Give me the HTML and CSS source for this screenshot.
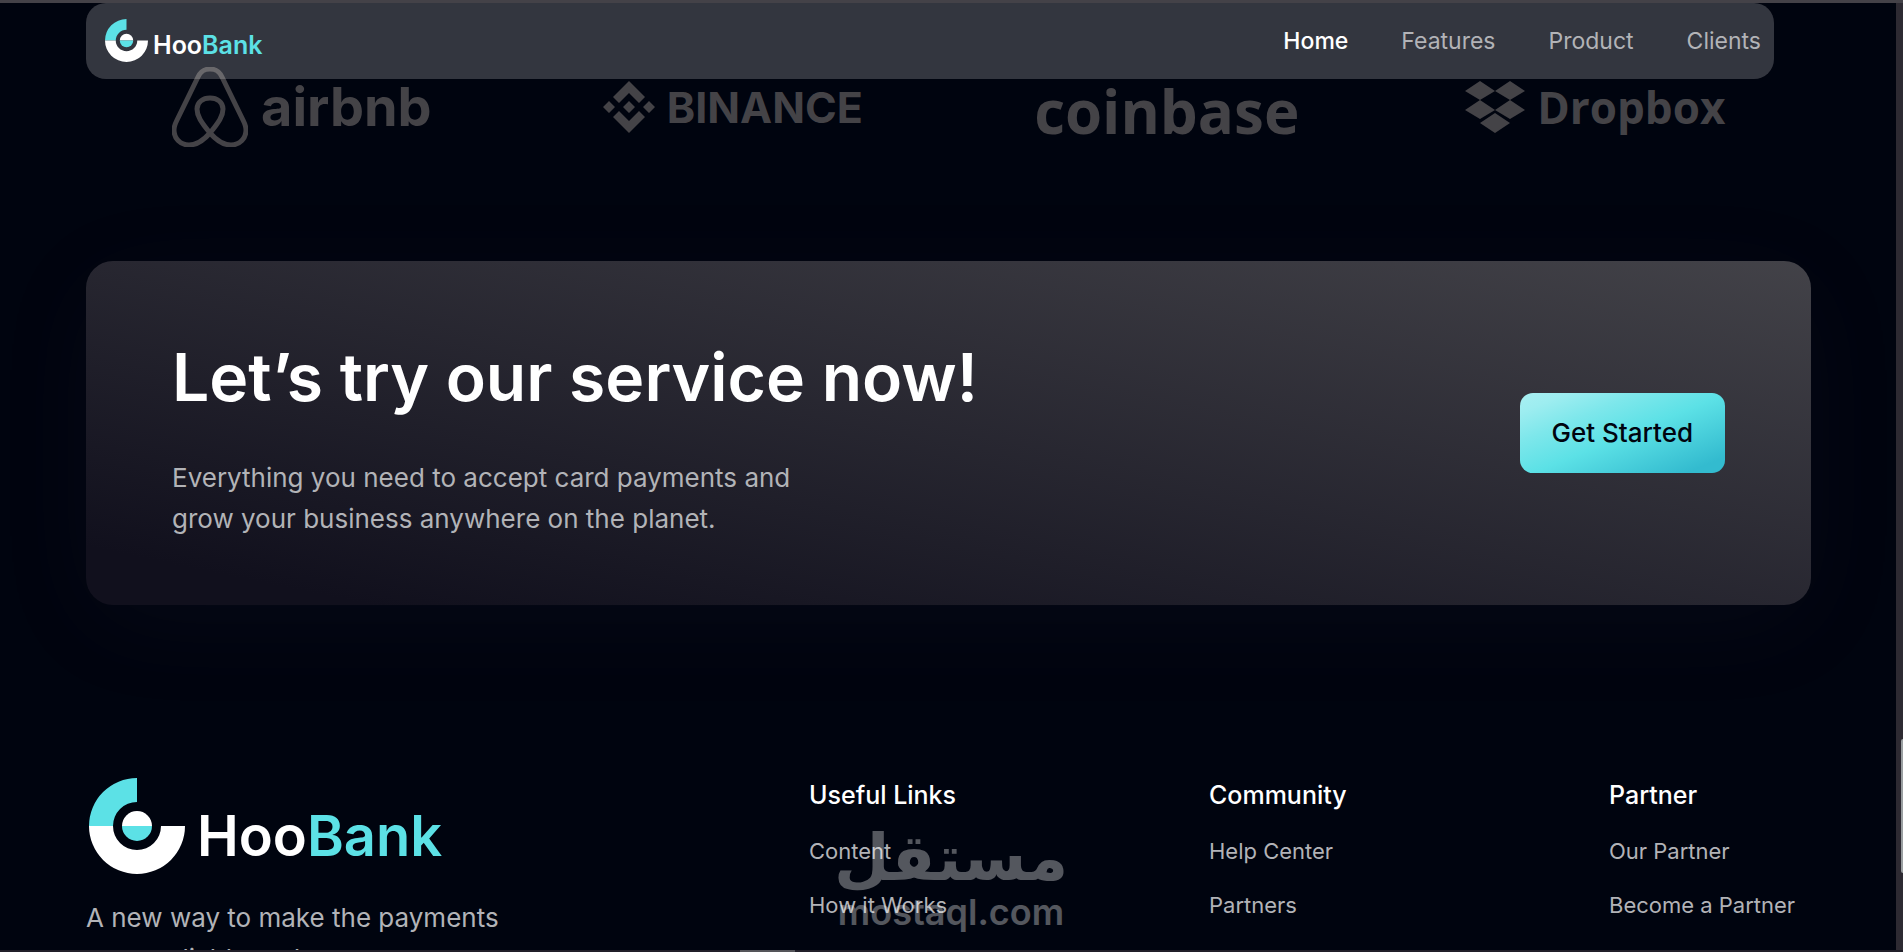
FILE: index.html
```html
<!DOCTYPE html>
<html lang="en">
<head>
    <meta charset="UTF-8">
    <meta name="viewport" content="width=device-width, initial-scale=1.0">
    <title>HooBank</title>

    <link rel="stylesheet" href="styles.css">
</head>
<body>

    <div class="top-strip"></div>

    <div class="view">
        <div class="page">

            <!-- Navbar -->
            <header class="navbar">
                <a class="logo" href="#home">
                    <svg class="logo-icon" viewBox="0 0 96 96" aria-hidden="true">
                        <path d="M48 0A48 48 0 0 0 0 48H24A24 24 0 0 1 48 24Z" fill="#5ce1e6"/>
                        <path d="M0 48A48 48 0 0 0 96 48H72A24 24 0 0 1 24 48Z" fill="#fff"/>
                        <path d="M33 48A15 15 0 0 1 63 48Z" fill="#fff"/>
                        <path d="M33 48A15 15 0 0 0 63 48Z" fill="#5ce1e6"/>
                    </svg>
                    <span class="logo-text">Hoo<span class="accent">Bank</span></span>
                </a>
                <nav>
                    <ul class="nav-list">
                        <li><a class="active" href="#home">Home</a></li>
                        <li><a href="#features">Features</a></li>
                        <li><a href="#product">Product</a></li>
                        <li><a href="#clients">Clients</a></li>
                    </ul>
                </nav>
            </header>

            <!-- Clients Section -->
            <section class="clients" id="clients">
                <div class="client">
                    <div class="client-logo">
                        <svg class="airbnb-icon" viewBox="0 0 76 80" aria-hidden="true">
                            <path d="M38 66C29 55 25 49 25 42C25 35 31 31 38 31C45 31 51 35 51 42C51 49 47 55 38 66C31 74 25 78 17 78C8 78 2 71 2 63C2 60 3 57 5 53L26 10C29 4 32 2 38 2C44 2 47 4 50 10L71 53C73 57 74 60 74 63C74 71 68 78 59 78C51 78 45 74 38 66Z" fill="none" stroke="currentColor" stroke-width="5" stroke-linejoin="round"/>
                        </svg>
                        <span class="airbnb-text">airbnb</span>
                    </div>
                </div>
                <div class="client">
                    <div class="client-logo">
                        <svg class="binance-icon" viewBox="0 0 52 52" aria-hidden="true">
                            <path d="M10 16L26 0L42 16L36 22L26 12L16 22Z" fill="currentColor"/>
                            <path d="M10 36L16 30L26 40L36 30L42 36L26 52Z" fill="currentColor"/>
                            <path d="M0 26L6 20L12 26L6 32ZM20 26L26 20L32 26L26 32ZM40 26L46 20L52 26L46 32Z" fill="currentColor"/>
                        </svg>
                        <span class="binance-text">BINANCE</span>
                    </div>
                </div>
                <div class="client">
                    <div class="client-logo">
                        <span class="coinbase-text">coinbase</span>
                    </div>
                </div>
                <div class="client">
                    <div class="client-logo">
                        <svg class="dropbox-icon" viewBox="0 0 60 52" aria-hidden="true">
                            <path d="M15 0L30 10L15 19L0 10ZM45 0L60 10L45 19L30 10ZM15 19L30 29L15 38L0 29ZM45 19L60 29L45 38L30 29ZM30 32L45 42L30 52L15 42Z" fill="currentColor"/>
                        </svg>
                        <span class="dropbox-text">Dropbox</span>
                    </div>
                </div>
            </section>

            <!-- CTA Section -->
            <section class="cta">
                <div class="cta-content">
                    <h2>Let’s try our service now!</h2>
                    <p>Everything you need to accept card payments and grow your business anywhere on the planet.</p>
                </div>
                <button class="btn" type="button">Get Started</button>
            </section>

            <!-- Footer Section -->
            <footer class="footer">
                <div class="footer-brand">
                    <a class="logo logo-large" href="#home">
                        <svg class="logo-icon" viewBox="0 0 96 96" aria-hidden="true">
                            <path d="M48 0A48 48 0 0 0 0 48H24A24 24 0 0 1 48 24Z" fill="#5ce1e6"/>
                            <path d="M0 48A48 48 0 0 0 96 48H72A24 24 0 0 1 24 48Z" fill="#fff"/>
                            <path d="M33 48A15 15 0 0 1 63 48Z" fill="#fff"/>
                            <path d="M33 48A15 15 0 0 0 63 48Z" fill="#5ce1e6"/>
                        </svg>
                        <span class="logo-text">Hoo<span class="accent">Bank</span></span>
                    </a>
                    <p>A new way to make the payments easy, reliable and secure.</p>
                </div>
                <div class="footer-column">
                    <h4>Useful Links</h4>
                    <ul>
                        <li><a href="#content">Content</a></li>
                        <li><a href="#how">How it Works</a></li>
                    </ul>
                </div>
                <div class="footer-column">
                    <h4>Community</h4>
                    <ul>
                        <li><a href="#help">Help Center</a></li>
                        <li><a href="#partners">Partners</a></li>
                    </ul>
                </div>
                <div class="footer-column">
                    <h4>Partner</h4>
                    <ul>
                        <li><a href="#our-partner">Our Partner</a></li>
                        <li><a href="#become">Become a Partner</a></li>
                    </ul>
                </div>
            </footer>

            <!-- Watermark -->
            <div class="watermark">
                <span class="watermark-ar" lang="ar" dir="rtl">مستقل</span>
                <span class="watermark-en">mostaql.com</span>
            </div>
        </div>

        <div class="scrollbar">
            <div class="scroll-thumb"></div>
        </div>
    </div>

    <div class="bottom-strip">
        <div class="bottom-thumb"></div>
    </div>

</body>
</html>
```
FILE: styles.css
```css
/* Global Styles */
* {
    box-sizing: border-box;
    margin: 0;
    padding: 0;
}

body {
    display: flex;
    flex-direction: column;
    height: 100vh;
    overflow: hidden;
    font-family: Inter, "Open Sans", sans-serif;
    background-color: #00040f;
    color: #fff;
}

a {
    color: inherit;
    text-decoration: none;
}

ul {
    list-style: none;
}

.top-strip {
    flex: none;
    height: 3px;
    background-color: #444248;
}

.view {
    flex: 1;
    display: flex;
    min-height: 0;
}

.page {
    position: relative;
    flex: 1;
    overflow: hidden;
    padding: 64px 85px 0 86px;
}

/* Navbar */
.navbar {
    position: absolute;
    z-index: 2;
    top: 0;
    left: 86px;
    right: 122px;
    height: 76px;
    padding: 0 13px 1px 19px;
    display: flex;
    align-items: center;
    justify-content: space-between;
    border-radius: 20px;
    background-color: rgba(255, 255, 255, 0.2);
}

.logo {
    display: flex;
    align-items: center;
    gap: 5px;
}

.logo-icon {
    width: 43px;
    height: 43px;
}

.logo-text {
    padding-top: 8px;
    font-size: 25px;
    line-height: 30px;
    font-weight: 600;
}

.accent {
    color: #5ce1e6;
}

.nav-list {
    display: flex;
    gap: 53px;
    font-size: 23px;
    line-height: 32px;
    color: #b2b3b7;
}

.nav-list .active {
    color: #fff;
    font-weight: 500;
}

/* Clients */
.clients {
    display: flex;
    color: #444347;
}

.client {
    flex: 1;
    display: flex;
    justify-content: center;
}

.client-logo {
    display: flex;
    align-items: center;
    justify-content: space-between;
    width: 260px;
    height: 80px;
    line-height: 64px;
    white-space: nowrap;
}

.airbnb-icon {
    width: 76px;
    height: 80px;
}

.airbnb-text {
    font-size: 54px;
    font-weight: 700;
}

.binance-icon {
    width: 52px;
    height: 52px;
}

.binance-text {
    font-size: 43px;
    font-weight: 700;
}

.coinbase-text {
    padding-top: 8px;
    font-family: "Open Sans", sans-serif;
    font-size: 60px;
    font-weight: 700;
}

.dropbox-icon {
    width: 60px;
    height: 52px;
}

.dropbox-text {
    font-family: "Open Sans", sans-serif;
    font-size: 44px;
    font-weight: 700;
}

/* CTA */
.cta {
    display: flex;
    align-items: center;
    justify-content: space-between;
    margin-top: 114px;
    padding: 64px 86px;
    border-radius: 27px;
    background: linear-gradient(-168.39deg, #ffffff -278.56%, #6d6d6d -78.47%, #11101d 91.61%);
    box-shadow: 0 20px 100px -10px rgba(66, 71, 91, 0.1);
}

.cta h2 {
    font-size: 66px;
    line-height: 104px;
    font-weight: 600;
}

.cta p {
    max-width: 640px;
    margin: 28px 0 2px;
    font-size: 26px;
    line-height: 41px;
    color: #b2b3b7;
}

.btn {
    padding: 24px 32px;
    border: none;
    border-radius: 13px;
    font-family: inherit;
    font-size: 26px;
    line-height: 32px;
    font-weight: 500;
    color: #00040f;
    cursor: pointer;
    background: linear-gradient(157.81deg, #def9fa -43.27%, #bef3f5 -21.24%, #9dedf0 12.19%, #7de7eb 29.82%, #5ce1e6 51.94%, #33bbcf 90.29%);
}

/* Footer */
.footer {
    display: grid;
    grid-template-columns: 723fr 400fr 400fr 202fr;
    margin-top: 173px;
}

.logo-large {
    gap: 12px;
    padding-left: 3px;
}

.logo-large .logo-icon {
    width: 96px;
    height: 96px;
}

.logo-large .logo-text {
    padding-top: 20px;
    font-size: 56px;
    line-height: 64px;
}

.footer-brand p {
    max-width: 440px;
    margin-top: 23px;
    font-size: 26px;
    line-height: 41px;
    color: #b2b3b7;
}

.footer-column h4 {
    font-size: 25px;
    line-height: 35px;
    font-weight: 500;
}

.footer-column ul {
    display: flex;
    flex-direction: column;
    gap: 22px;
    margin-top: 22px;
    font-size: 22px;
    line-height: 32px;
    color: #b2b3b7;
    white-space: nowrap;
}

/* Watermark */
.watermark {
    position: absolute;
    left: 837px;
    bottom: 16px;
    width: 228px;
    display: flex;
    flex-direction: column;
    align-items: center;
    color: #fff;
    opacity: 0.33;
    font-weight: 700;
    pointer-events: none;
}

.watermark-ar {
    font-family: "DejaVu Sans", sans-serif;
    font-size: 64px;
    line-height: 64px;
}

.watermark-en {
    font-size: 36px;
    line-height: 44px;
    font-weight: 600;
}

/* Window edges */
.scrollbar {
    flex: none;
    width: 7px;
    padding-top: 736px;
    padding-left: 5px;
    background-color: #2d2a32;
}

.scroll-thumb {
    height: 134px;
    border-radius: 4px 0 0 4px;
    background-color: #9a9fa1;
}

.bottom-strip {
    flex: none;
    height: 2px;
    padding-left: 740px;
    background-color: #211f29;
}

.bottom-thumb {
    width: 55px;
    height: 2px;
    background-color: #55555a;
}
```
